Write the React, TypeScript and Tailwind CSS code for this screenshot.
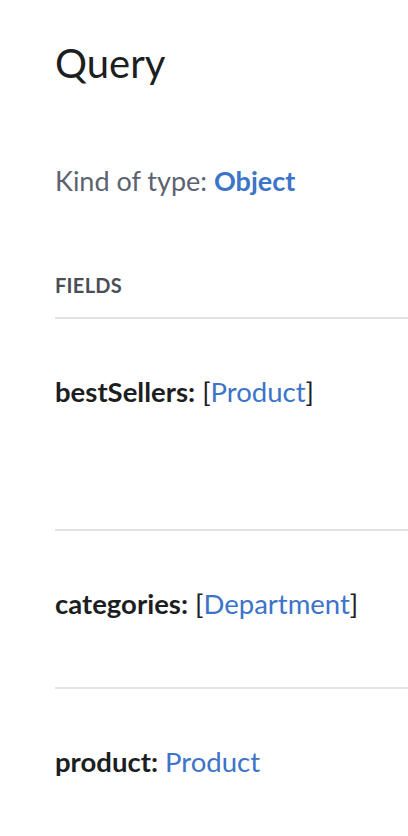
import React from "react";

const font = { fontFamily: "Lato, 'Noto Sans', sans-serif" };

function Field({ name, type, list, h }: { name: string; type: string; list?: boolean; h: string }) {
  return (
    <div className={`border-t-2 border-[#e1e3e7] ${h}`}>
      <div className="pt-[55px] text-[27.5px] leading-[36px] text-[#1c1e22]">
        <span className="font-bold">{name}:</span>{" "}
        {list && <span>[</span>}
        <span className="text-[#3b74c9]">{type}</span>
        {list && <span>]</span>}
      </div>
    </div>
  );
}

export default function App() {
  return (
    <div className="min-h-screen bg-white pl-[55px] overflow-hidden" style={font}>
      <h1 className="pt-[37px] text-[40px] leading-[52px] text-[#1c1e22] font-normal">Query</h1>
      <p className="mt-[74px] text-[27px] leading-[36px] text-[#5c6370]">
        Kind of type: <span className="font-bold text-[#3b74c9]">Object</span>
      </p>
      <div className="mt-[74px] text-[20px] leading-[24px] font-bold tracking-[0.3px] text-[#4a4e57]">FIELDS</div>
      <div className="mt-[20px]">
        <Field name="bestSellers" type="Product" list h="h-[212px]" />
        <Field name="categories" type="Department" list h="h-[158px]" />
        <Field name="product" type="Product" h="h-[158px]" />
      </div>
    </div>
  );
}
